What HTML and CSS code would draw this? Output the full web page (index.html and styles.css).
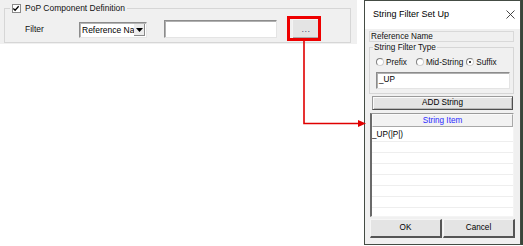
FILE: index.html
```html
<!DOCTYPE html>
<html>
<head>
<meta charset="utf-8">
<link rel="stylesheet" href="styles.css">
</head>
<body>
<div class="canvas">
  <div class="left-panel">
    <fieldset class="group">
      <legend class="group-legend"><span class="check"><svg width="9" height="9" viewBox="0 0 9 9"><path d="M1.5 4.5 L3.5 6.5 L7.5 2" fill="none" stroke="#000" stroke-width="1.4"/></svg></span><span>PoP Component Definition</span></legend>
      <div class="filter-row">
        <span class="filter-label">Filter</span>
        <div class="combo"><span class="combo-text">Reference Na</span><span class="combo-btn"><svg width="7" height="4" viewBox="0 0 7 4"><path d="M0 0 H7 L3.5 4 Z" fill="#000"/></svg></span></div>
        <div class="textbox"></div>
        <div class="btn-dots">...</div>
      </div>
    </fieldset>
  </div>

  <div class="dialog">
    <div class="titlebar">
      <span class="title">String Filter Set Up</span>
      <svg class="close" width="9" height="9" viewBox="0 0 9 9"><path d="M0.5 0.5 L8.5 8.5 M8.5 0.5 L0.5 8.5" stroke="#333" stroke-width="0.9"/></svg>
    </div>
    <div class="dlg-body">
      <div class="ref-name">Reference Name</div>
      <fieldset class="type-group">
        <legend class="type-legend">String Filter Type</legend>
        <div class="radios">
          <span class="radio"></span><span class="radio-label gap-lg">Prefix</span>
          <span class="radio"></span><span class="radio-label gap-sm">Mid-String</span>
          <span class="radio on"></span><span class="radio-label">Suffix</span>
        </div>
        <div class="type-input">_UP</div>
      </fieldset>
      <div class="add-btn">ADD String</div>
      <div class="list">
        <div class="list-head">String Item</div>
        <div class="row first">_UP(|P|)</div>
        <div class="row"></div>
        <div class="row"></div>
        <div class="row"></div>
        <div class="row"></div>
        <div class="row"></div>
        <div class="row"></div>
      </div>
      <div class="actions">
        <div class="btn">OK</div>
        <div class="btn">Cancel</div>
      </div>
    </div>
  </div>

  <svg class="annot" width="523" height="246" viewBox="0 0 523 246">
    <rect x="288.5" y="17.5" width="31" height="22" fill="none" stroke="#ee0000" stroke-width="3"/>
    <path d="M304 41 V123.5 H359" fill="none" stroke="#e00000" stroke-width="1.6"/>
    <path d="M358 120 L366 123.5 L358 127 Z" fill="#e00000"/>
  </svg>
</div>
</body>
</html>
```

FILE: styles.css
```css
* { box-sizing: border-box; }
html, body { margin: 0; padding: 0; background: #ffffff; }
body {
  font-family: "Liberation Sans", Arial, sans-serif;
  color: #000;
}
.canvas {
  position: relative;
  width: 523px;
  height: 246px;
  display: flex;
  align-items: flex-start;
  gap: 7px;
  overflow: hidden;
}

/* left panel */
.left-panel {
  width: 357px;
  height: 44px;
  background: #f0f0f0;
  padding: 3px 0 1px 4px;
  flex: none;
}
.group {
  margin: 0;
  width: 347px;
  border: 1px solid #d6d6d6;
  padding: 5px 0 4px 5px;
  min-width: 0;
}
.group-legend {
  padding: 0 2px;
  height: 11px;
  display: flex;
  align-items: center;
  gap: 4px;
  font-size: 8.5px;
  line-height: 11px;
  color: #111;
}
.check {
  width: 9px;
  height: 9px;
  background: #fff;
  border: 1px solid #8a8a8a;
  display: flex;
}
.check svg { margin: -1px 0 0 -1px; }
.filter-row {
  display: flex;
  align-items: center;
  height: 19px;
  margin-left: 15px;
  font-size: 8.5px;
}
.filter-label { width: 54px; color: #111; }
.combo {
  width: 68px;
  height: 16px;
  margin-top: 3px;
  background: #fff;
  border: 1px solid;
  border-color: #8c8c8c #e6e6e6 #e6e6e6 #8c8c8c;
  box-shadow: inset 1px 1px 0 #b5b5b5;
  display: flex;
  align-items: stretch;
  overflow: hidden;
}
.combo-text {
  flex: 1;
  padding-left: 2px;
  line-height: 14px;
  white-space: nowrap;
  overflow: hidden;
}
.combo-btn {
  width: 11px;
  margin: 1px 1px 1px 0;
  background: #ececec;
  border-right: 1px solid #8a8a8a;
  border-bottom: 1px solid #8a8a8a;
  display: flex;
  align-items: center;
  justify-content: center;
}
.textbox {
  width: 113px;
  height: 18px;
  margin-left: 17px;
  margin-top: 1px;
  background: #fff;
  border: 1px solid;
  border-color: #8c8c8c #e4e4e4 #e4e4e4 #8c8c8c;
  box-shadow: inset 1px 1px 0 #b0b0b0;
}
.btn-dots {
  width: 28px;
  height: 20px;
  margin-left: 15px;
  background: #e4e4e4;
  border: 1px solid;
  border-color: #f4f4f4 #5f5f5f #5f5f5f #f4f4f4;
  box-shadow: inset -1px -1px 0 #a9a9a9;
  text-align: center;
  font-size: 9px;
  line-height: 18px;
  color: #4a4a7a;
  letter-spacing: 0.5px;
}

/* dialog */
.dialog {
  width: 157px;
  height: 245px;
  flex: none;
  border: 1px solid #444c44;
  box-shadow: 2px 0 0 #38463a;
  display: flex;
  flex-direction: column;
  background: #f0f0f0;
}
.titlebar {
  height: 28px;
  background: #fff;
  display: flex;
  align-items: center;
  justify-content: space-between;
  padding: 0 5px 2px 8px;
}
.title { font-size: 9px; color: #000; }
.dlg-body {
  flex: 1;
  display: flex;
  flex-direction: column;
  padding: 2px 6px 6px 4px;
  font-size: 8.2px;
}
.ref-name {
  height: 11px;
  border: 1px solid #d9d9d9;
  padding-left: 1px;
  line-height: 9px;
  color: #111;
}
.type-group {
  margin: 0;
  min-width: 0;
  border: 1px solid #d6d6d6;
  padding: 0 3px 4px 6px;
}
.type-legend {
  padding: 0 1px;
  margin-left: -3px;
  height: 11px;
  line-height: 11px;
  font-size: 8.2px;
  color: #111;
}
.radios {
  display: flex;
  align-items: center;
  height: 10px;
  margin-top: 4px;
  font-size: 8.2px;
  color: #111;
}
.radio {
  width: 8px;
  height: 8px;
  border-radius: 50%;
  border: 1px solid #808080;
  border-right-color: #d0d0d0;
  border-bottom-color: #d0d0d0;
  background: #fff;
  position: relative;
  flex: none;
}
.radio.on::after {
  content: "";
  position: absolute;
  left: 2px;
  top: 2px;
  width: 2px;
  height: 2px;
  border-radius: 50%;
  background: #000;
}
.radio-label { margin: 0 0 0 2px; }
.radio-label.gap-lg { margin-right: 9px; }
.radio-label.gap-sm { margin-right: 3px; }
.type-input {
  margin-top: 5px;
  height: 17px;
  background: #fff;
  border: 1px solid;
  border-color: #8c8c8c #e4e4e4 #e4e4e4 #8c8c8c;
  box-shadow: inset 1px 1px 0 #b0b0b0;
  padding-left: 2px;
  line-height: 14px;
  font-size: 8.2px;
}
.add-btn {
  margin: 2px 1px 0 3px;
  height: 14px;
  background: #e4e4e4;
  border: 1px solid;
  border-color: #9a9a9a #4e4e4e #4e4e4e #9a9a9a;
  box-shadow: inset 1px 1px 0 #fafafa, inset -1px -1px 0 #b8b8b8;
  text-align: center;
  line-height: 12px;
  font-size: 8.2px;
}
.list {
  margin: 3px 0 0 1px;
  height: 104px;
  background: #fff;
  border: 1px solid;
  border-color: #9a9a9a #f4f4f4 #f4f4f4 #6a6a6a;
  border-left-width: 2px;
  display: flex;
  flex-direction: column;
  overflow: hidden;
}
.list-head {
  height: 13px;
  flex: none;
  background: #f2f2f2;
  border: 1px solid;
  border-color: #fafafa #a8a8a8 #a8a8a8 #fafafa;
  text-align: center;
  color: #2b2bff;
  line-height: 11px;
  font-size: 8.2px;
}
.row {
  height: 11px;
  flex: none;
  border-bottom: 1px solid #eeeeee;
  line-height: 10px;
  font-size: 8.2px;
}
.row.first { height: 15px; line-height: 16px; }
.actions {
  margin: 2px 0 0 1px;
  display: flex;
  gap: 1px;
}
.btn {
  width: 72px;
  height: 19px;
  flex: none;
  background: #e4e4e4;
  border: 1px solid;
  border-color: #f6f6f6 #555 #555 #f6f6f6;
  border-right-width: 2px;
  border-bottom-width: 2px;
  text-align: center;
  line-height: 15px;
  font-size: 8.2px;
}

/* annotation overlay */
.annot {
  position: absolute;
  left: 0;
  top: 0;
  pointer-events: none;
}
```
